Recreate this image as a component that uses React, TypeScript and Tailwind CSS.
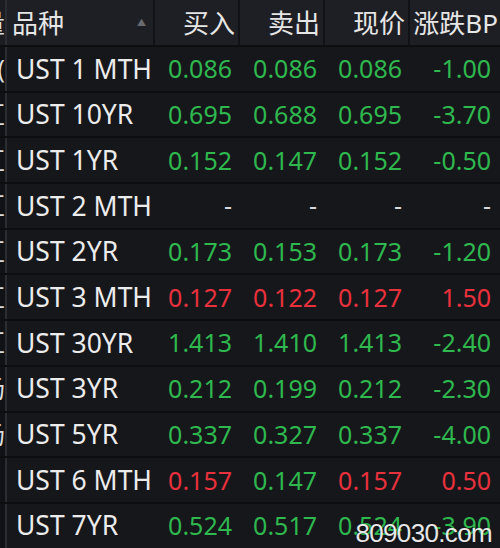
import { Fragment } from 'react'

type Row = {
  edge: string
  name: string
  bid: string
  ask: string
  last: string
  bp: string
  tone: 'up' | 'down' | 'flat'
}

const rows: Row[] = [
  { edge: '美元(', name: 'UST 1 MTH', bid: '0.086', ask: '0.086', last: '0.086', bp: '-1.00', tone: 'down' },
  { edge: '外汇', name: 'UST 10YR', bid: '0.695', ask: '0.688', last: '0.695', bp: '-3.70', tone: 'down' },
  { edge: '外汇', name: 'UST 1YR', bid: '0.152', ask: '0.147', last: '0.152', bp: '-0.50', tone: 'down' },
  { edge: '外汇', name: 'UST 2 MTH', bid: '-', ask: '-', last: '-', bp: '-', tone: 'flat' },
  { edge: '外汇', name: 'UST 2YR', bid: '0.173', ask: '0.153', last: '0.173', bp: '-1.20', tone: 'down' },
  { edge: '外汇', name: 'UST 3 MTH', bid: '0.127', ask: '0.122', last: '0.127', bp: '1.50', tone: 'up' },
  { edge: '外汇', name: 'UST 30YR', bid: '1.413', ask: '1.410', last: '1.413', bp: '-2.40', tone: 'down' },
  { edge: '市场', name: 'UST 3YR', bid: '0.212', ask: '0.199', last: '0.212', bp: '-2.30', tone: 'down' },
  { edge: '市场', name: 'UST 5YR', bid: '0.337', ask: '0.327', last: '0.337', bp: '-4.00', tone: 'down' },
  { edge: '', name: 'UST 6 MTH', bid: '0.157', ask: '0.147', last: '0.157', bp: '0.50', tone: 'up' },
  { edge: '', name: 'UST 7YR', bid: '0.524', ask: '0.517', last: '0.524', bp: '-3.90', tone: 'down' },
]

const toneClass = {
  up: 'text-[#e8313c]',
  down: 'text-[#2fb84e]',
  flat: 'text-[#d8d8d8]',
}

// 6 MTH row: bid and last are red, ask stays green
const cellTone = (r: Row, key: 'bid' | 'ask' | 'last' | 'bp') => {
  if (r.name === 'UST 6 MTH' && key === 'ask') return toneClass.down
  return toneClass[r.tone]
}

const EdgeCell = ({ text, header }: { text: string; header?: boolean }) => (
  <div
    className={`w-[7px] shrink-0 overflow-hidden flex justify-end items-center border-r-2 border-[#2c2d33] ${
      header ? 'bg-[#1c1d22]' : 'bg-[#111216]'
    }`}
  >
    <span className="whitespace-nowrap text-[#dcdcdc]">{text}</span>
  </div>
)

export default function App() {
  return (
    <div
      className="relative w-[500px] h-[548px] overflow-hidden bg-[#16171b] text-[25px] leading-none"
      style={{ fontFamily: '"Noto Sans", "Noto Sans CJK SC", sans-serif' }}
    >
      {/* header */}
      <div className="flex h-[45px] bg-[#1e1f24] text-[#e6e6e6] text-[26px]">
        <EdgeCell text="成交量" header />
        <div className="w-[148px] flex items-center justify-between pl-[5px] pr-[7px] border-r-2 border-[#111215]">
          <span>品种</span>
          <span className="text-[9px] text-[#6a6b70]">▲</span>
        </div>
        <div className="w-[85px] flex items-center justify-end pr-[3px] border-r-2 border-[#111215]">
          <span>买入</span>
        </div>
        <div className="w-[85px] flex items-center justify-end pr-[3px] border-r-2 border-[#111215]">
          <span>卖出</span>
        </div>
        <div className="w-[85px] flex items-center justify-end pr-[3px] border-r-2 border-[#111215]">
          <span>现价</span>
        </div>
        <div className="flex-1 flex items-center justify-end pr-[2px]">
          <span className="whitespace-nowrap">涨跌BP</span>
        </div>
      </div>

      {rows.map((r) => (
        <Fragment key={r.name}>
          <div className="flex h-[45.7px] border-t-2 border-[#0d0e10]">
            <EdgeCell text={r.edge} />
            <div className="w-[148px] flex items-center pl-[9px] text-[#ececec] text-[26.5px] whitespace-nowrap">{r.name}</div>
            <div className={`w-[85px] flex items-center justify-end pr-[8px] ${cellTone(r, 'bid')}`}>{r.bid}</div>
            <div className={`w-[85px] flex items-center justify-end pr-[8px] ${cellTone(r, 'ask')}`}>{r.ask}</div>
            <div className={`w-[85px] flex items-center justify-end pr-[8px] ${cellTone(r, 'last')}`}>{r.last}</div>
            <div className={`flex-1 flex items-center justify-end pr-[9px] ${cellTone(r, 'bp')}`}>{r.bp}</div>
          </div>
        </Fragment>
      ))}

      {/* watermark */}
      <div
        className="absolute right-[8px] bottom-[2px] text-[26px] text-white/90 tracking-tight"
        style={{ fontFamily: '"Liberation Sans", sans-serif', textShadow: '0 0 2px rgba(0,0,0,0.6)' }}
      >
        809030.com
      </div>
    </div>
  )
}
